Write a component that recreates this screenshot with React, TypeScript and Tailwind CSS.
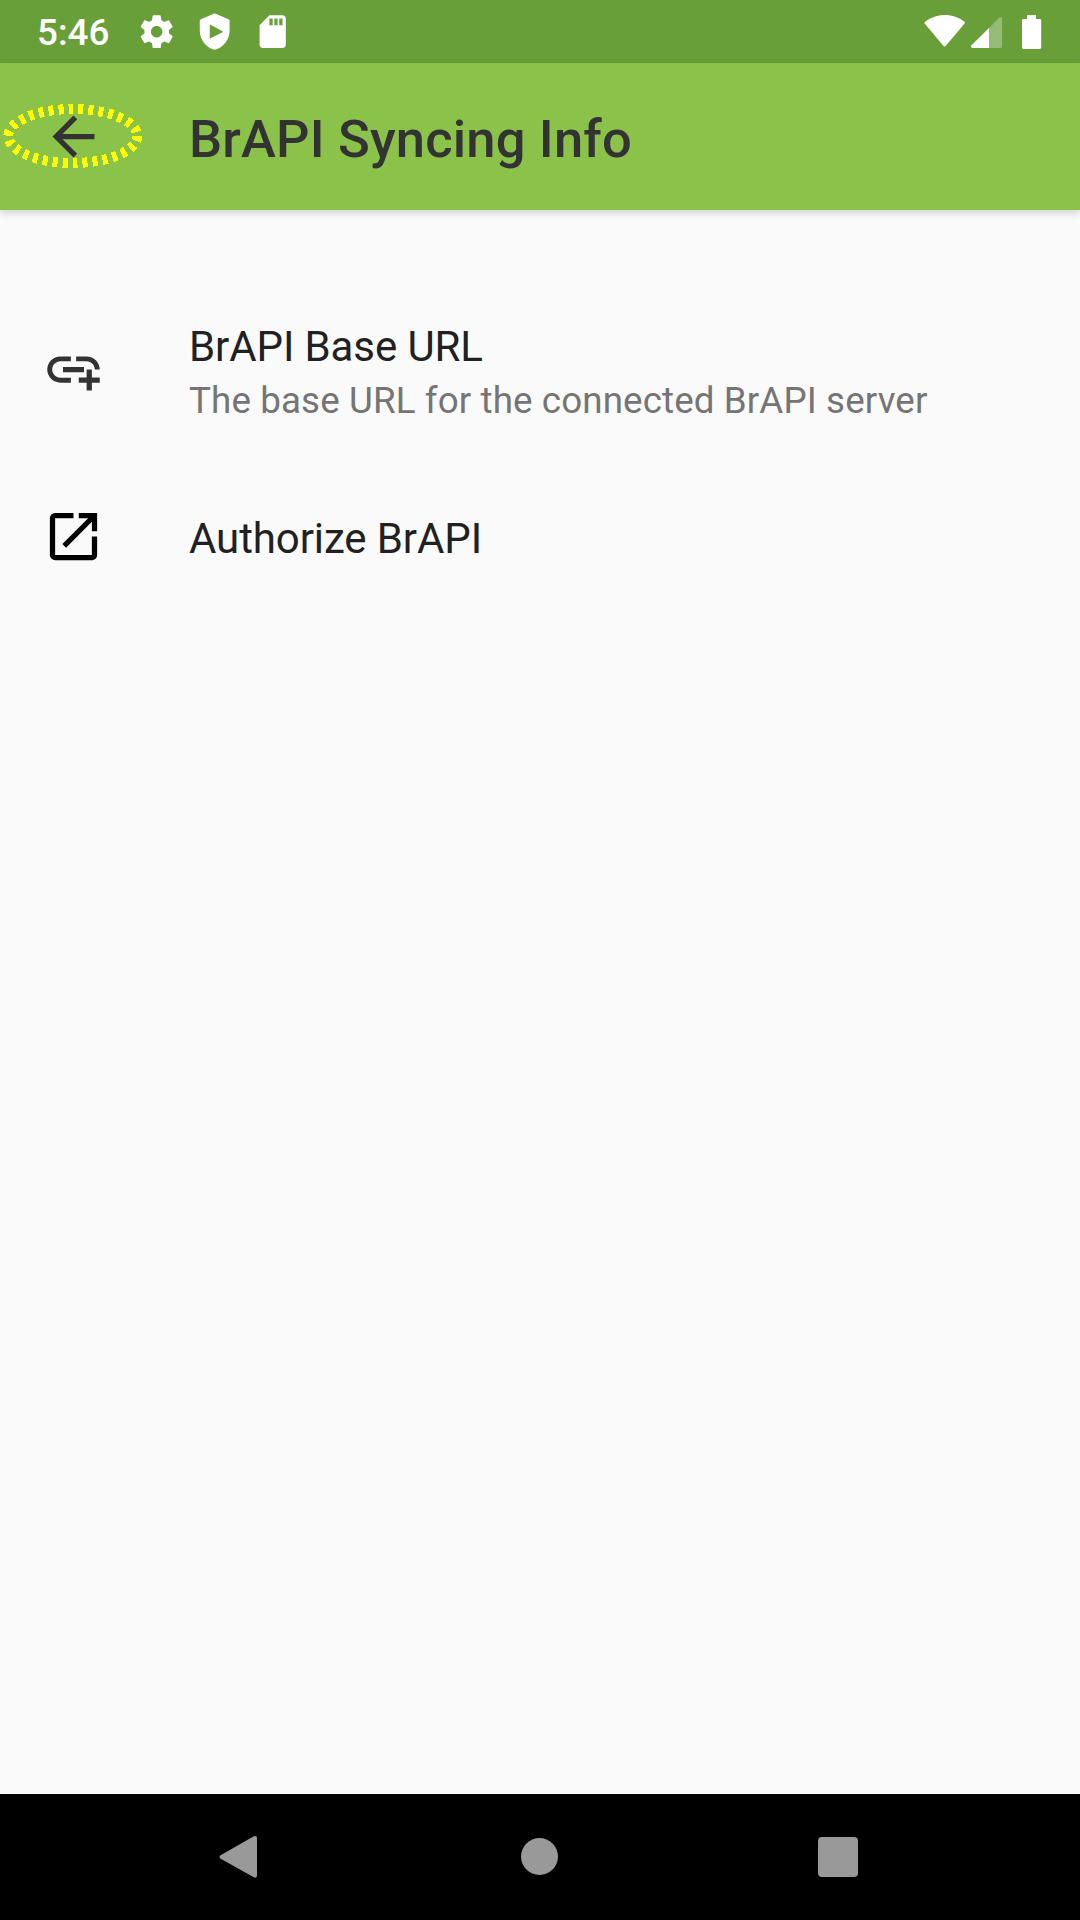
import type { ReactNode } from 'react';

function StatusBar() {
  return (
    <div className="flex h-[63px] items-center justify-between bg-[#689f38] pl-[37px] pr-[38px] text-white">
      <div className="flex items-center">
        <span className="w-[100px] pt-[2px] text-[36.75px] font-medium leading-[43px]">5:46</span>
        <div className="flex gap-[18.6px]">
          <svg className="size-[39.375px]" viewBox="0 0 24 24" fill="currentColor">
            <path d="M19.43 12.98c.04-.32.07-.64.07-.98s-.03-.66-.07-.98l2.11-1.65c.19-.15.24-.42.12-.64l-2-3.46c-.12-.22-.39-.3-.61-.22l-2.49 1c-.52-.4-1.08-.73-1.69-.98l-.38-2.65C14.46 2.18 14.25 2 14 2h-4c-.25 0-.46.18-.49.42l-.38 2.65c-.61.25-1.17.59-1.69.98l-2.49-1c-.23-.09-.49 0-.61.22l-2 3.46c-.13.22-.07.49.12.64l2.11 1.65c-.04.32-.07.65-.07.98s.03.66.07.98l-2.11 1.65c-.19.15-.24.42-.12.64l2 3.46c.12.22.39.3.61.22l2.49-1c.52.4 1.08.73 1.69.98l.38 2.65c.03.24.24.42.49.42h4c.25 0 .46-.18.49-.42l.38-2.65c.61-.25 1.17-.59 1.69-.98l2.49 1c.23.09.49 0 .61-.22l2-3.46c.12-.22.07-.49-.12-.64l-2.11-1.65zM12 15.5c-1.93 0-3.5-1.57-3.5-3.5s1.57-3.5 3.5-3.5 3.5 1.57 3.5 3.5-1.57 3.5-3.5 3.5z" />
          </svg>
          <svg className="size-[39.375px]" viewBox="0 0 24 24" fill="currentColor" fillRule="evenodd">
            <path d="M11.4 1.1Q12 .8 12.6 1.1L20.4 4.4Q21.1 4.7 21.1 5.5V11.3C21.1 16.8 17.5 21.4 12.6 22.9Q12 23.1 11.4 22.9C6.5 21.4 2.9 16.8 2.9 11.3V5.5Q2.9 4.7 3.6 4.4ZM9 8.2V15.8Q9 16.3 9.5 16L16.8 12.3Q17.2 12 16.8 11.7L9.5 7.8Q9 7.6 9 8.2Z" />
          </svg>
          <svg className="size-[39.375px]" viewBox="0 0 24 24" fill="currentColor">
            <path d="M18 2h-8L4.02 8 4 20c0 1.1.9 2 2 2h12c1.1 0 2-.9 2-2V4c0-1.1-.9-2-2-2zm-6 6h-2V4h2v4zm3 0h-2V4h2v4zm3 0h-2V4h2v4z" />
          </svg>
        </div>
      </div>
      <div className="flex">
        <svg className="h-[36px] w-[42px]" viewBox="924 13 42 36" fill="currentColor">
          <path d="M925 20.8C936.5 11.8 953.5 11.8 964.5 20.8Q965.2 21.6 964.6 22.5L945.7 45Q944.6 46.2 943.5 45L924.7 22.5Q924.2 21.6 925 20.8Z" />
        </svg>
        <svg className="ml-[4px] h-[36px] w-[33px]" viewBox="970 13 33 36" fill="currentColor">
          <path fillOpacity=".3" d="M989 27L999.5 16.6Q1002 14.8 1002 17.5V45.6Q1002 47 1000.6 47H989Z" />
          <path d="M989 27V47H972Q970.2 46.6 971.2 44.6Z" />
        </svg>
        <svg className="ml-[18px] h-[36px] w-[21px]" viewBox="1021 13 21 36" fill="currentColor">
          <path d="M1027 14H1036V18H1039.8Q1041.2 18 1041.2 19.4V46.6Q1041.2 48 1039.8 48H1023.4Q1022 48 1022 46.6V19.4Q1022 18 1023.4 18H1027Z" />
        </svg>
      </div>
    </div>
  );
}

function Toolbar() {
  return (
    <header className="relative flex h-[147px] items-center bg-[#8bc34a] pl-[42px] text-[#333] shadow-[0_3px_8px_rgba(0,0,0,0.16)]">
      <button className="mr-[84px] size-[63px]" aria-label="Back">
        <svg className="size-[63px]" viewBox="0 0 24 24" fill="currentColor">
          <path d="M20 11H7.83l5.59-5.59L12 4l-8 8 8 8 1.41-1.41L7.83 13H20v-2z" />
        </svg>
      </button>
      <h1 className="pt-[4px] text-[52.5px] font-medium leading-[62px] tracking-[0.17px]">BrAPI Syncing Info</h1>
      <svg className="absolute left-0 top-[37px] h-[72px] w-[148px]" viewBox="0 100 148 72" shapeRendering="crispEdges">
        <ellipse cx="72.8" cy="136" rx="64.5" ry="27" fill="none" stroke="#ff0" strokeWidth="10" strokeDasharray="5 5" />
      </svg>
    </header>
  );
}

function PreferenceRow({ icon, title, summary }: { icon: ReactNode; title: string; summary?: string }) {
  return (
    <div className="flex items-center pl-[42px]">
      <div className="mr-[84px] size-[63px]">{icon}</div>
      <div className={summary ? 'flex flex-col gap-[8px] pt-[5px]' : 'pt-[3px]'}>
        <div className="text-[42px] leading-[49px] tracking-[-0.1px] text-[#212121]">{title}</div>
        {summary && (
          <div className="text-[36.75px] leading-[43px] tracking-[0.11px] text-[#757575]">{summary}</div>
        )}
      </div>
    </div>
  );
}

function NavigationBar() {
  return (
    <nav className="flex h-[126px] items-center bg-black pl-[219px] text-[#999]">
      <svg className="h-[44px] w-[39px]" viewBox="0 0 39 44" fill="currentColor">
        <path d="M1.2 20.4L34.8 1.2Q38 .2 38 3V40.5Q38 43.5 34.8 42.3L1.2 23.6Q-.2 22 1.2 20.4Z" />
      </svg>
      <div className="mb-px ml-[263px] size-[37px] rounded-full bg-[#999]" />
      <div className="ml-[260px] size-[40px] rounded-[4px] bg-[#999]" />
    </nav>
  );
}

export default function App() {
  return (
    <div className="flex h-[1920px] w-[1080px] flex-col overflow-hidden bg-[#fafafa] font-[Roboto,sans-serif]">
      <StatusBar />
      <Toolbar />
      <main className="flex flex-1 flex-col gap-[83px] pt-[107px]">
        <PreferenceRow
          title="BrAPI Base URL"
          summary="The base URL for the connected BrAPI server"
          icon={
            <svg className="size-[63px] text-[#333]" viewBox="0 0 24 24" fill="currentColor">
              <path d="M8 11h8v2H8zm12.1 1H22c0-2.76-2.24-5-5-5h-4v1.9h4c1.71 0 3.1 1.39 3.1 3.1zM3.9 12c0-1.71 1.39-3.1 3.1-3.1h4V7H7c-2.76 0-5 2.24-5 5s2.24 5 5 5h4v-1.9H7c-1.71 0-3.1-1.39-3.1-3.1zM19 12h-2v3h-3v2h3v3h2v-3h3v-2h-3z" />
            </svg>
          }
        />
        <PreferenceRow
          title="Authorize BrAPI"
          icon={
            <svg className="size-[63px] text-black" viewBox="0 0 24 24" fill="currentColor">
              <path d="M19 19H5V5h7V3H5a2 2 0 0 0-2 2v14a2 2 0 0 0 2 2h14c1.1 0 2-.9 2-2v-7h-2v7zM14 3v2h3.59l-9.83 9.83 1.41 1.41L19 6.41V10h2V3h-7z" />
            </svg>
          }
        />
      </main>
      <NavigationBar />
    </div>
  );
}
